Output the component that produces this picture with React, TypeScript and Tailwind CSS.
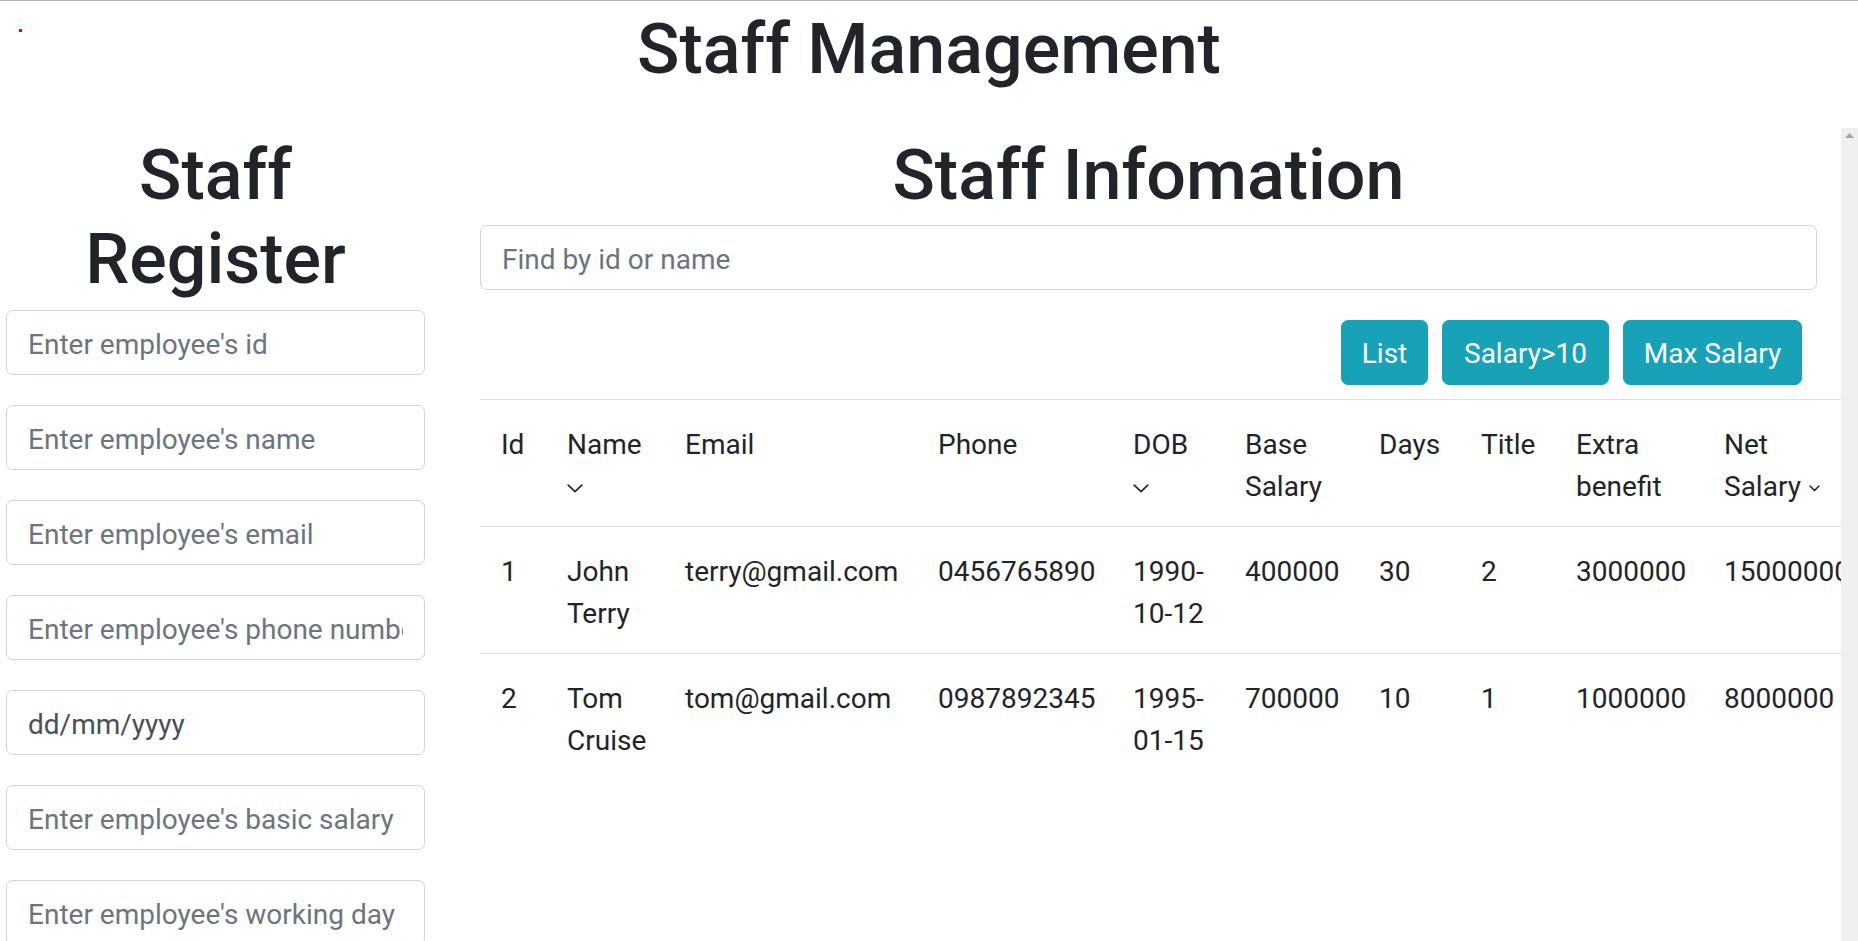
import React from "react";

const FONT = { fontFamily: "Roboto, 'Noto Sans', Arial, sans-serif" };

function Chevron({ small = false }: { small?: boolean }) {
  if (small) {
    return (
      <svg width="11" height="7" viewBox="0 0 11 7" className="inline-block align-middle ml-[8px]" fill="none">
        <polyline points="1,1 5.5,5.5 10,1" stroke="#212529" strokeWidth="1.5" strokeLinecap="round" strokeLinejoin="round" />
      </svg>
    );
  }
  return (
    <svg width="16" height="9" viewBox="0 0 16 9" className="inline-block align-middle" fill="none">
      <polyline points="1.2,1.2 8,7.6 14.8,1.2" stroke="#212529" strokeWidth="1.7" strokeLinecap="round" strokeLinejoin="round" />
    </svg>
  );
}

const inputCls =
  "block w-full h-[65px] px-[21px] pt-[3px] text-[28px] leading-[42px] text-[#495057] placeholder:text-[#6c757d] bg-white border border-[#ced4da] rounded-[7px] outline-none";

const btnCls =
  "h-[65px] pt-[3px] rounded-[7px] bg-[#17a2b8] border border-[#17a2b8] text-white text-[28px] leading-[42px]";

const cell = "align-top text-left font-normal pl-[21px] pr-[8px] pt-[24px] pb-[18px] border-t border-[#dee2e6] leading-[42px] whitespace-nowrap overflow-visible";

type Row = {
  id: string;
  name: [string, string];
  email: string;
  phone: string;
  dob: [string, string];
  base: string;
  days: string;
  title: string;
  extra: string;
  net: string;
};

const rows: Row[] = [
  { id: "1", name: ["John", "Terry"], email: "terry@gmail.com", phone: "0456765890", dob: ["1990-", "10-12"], base: "400000", days: "30", title: "2", extra: "3000000", net: "15000000" },
  { id: "2", name: ["Tom", "Cruise"], email: "tom@gmail.com", phone: "0987892345", dob: ["1995-", "01-15"], base: "700000", days: "10", title: "1", extra: "1000000", net: "8000000" },
];

export default function App() {
  return (
    <div className="relative w-[1858px] h-[941px] overflow-hidden bg-white border-t border-[#b4b4b4] text-[#212529]" style={FONT}>
      <div className="absolute left-[19px] top-[28px] w-[3px] h-[3px] bg-[#ff0000]" />
      <h1 className="mt-[6px] text-center text-[70px] leading-[84px] font-medium">Staff Management</h1>

      <div className="mt-[37px] flex h-[813px] overflow-hidden">
        <div className="flex flex-1 min-w-0 overflow-hidden">
          {/* Left column */}
          <div className="w-[431px] shrink-0 px-[6px]">
            <h1 className="pt-[5px] mb-[9px] text-center text-[70px] leading-[84px] font-medium">
              Staff
              <br />
              Register
            </h1>
            <div className="flex flex-col gap-[30px]">
              <input className={inputCls} placeholder="Enter employee's id" />
              <input className={inputCls} placeholder="Enter employee's name" />
              <input className={inputCls} placeholder="Enter employee's email" />
              <input className={inputCls} placeholder="Enter employee's phone number" />
              <input className={inputCls} defaultValue="dd/mm/yyyy" readOnly />
              <input className={inputCls} placeholder="Enter employee's basic salary" />
              <input className={inputCls} placeholder="Enter employee's working day" />
              <input className={inputCls} placeholder="Enter employee's title" />
            </div>
          </div>

          {/* Right column */}
          <div className="flex-1 min-w-0 pl-[49px] pr-[24px]">
            <h1 className="pt-[5px] mb-[8px] text-center text-[70px] leading-[84px] font-medium">Staff Infomation</h1>
            <input className={inputCls} placeholder="Find by id or name" />
            <div className="mt-[30px] flex justify-end gap-[14px] pr-[15px]">
              <button className={`${btnCls} w-[87px]`}>List</button>
              <button className={`${btnCls} w-[167px]`}>Salary&gt;10</button>
              <button className={`${btnCls} w-[179px]`}>Max Salary</button>
            </div>
            <table className="mt-[14px] table-fixed border-collapse w-[1390px] text-[28px]">
              <colgroup>
                <col className="w-[66px]" />
                <col className="w-[118px]" />
                <col className="w-[253px]" />
                <col className="w-[195px]" />
                <col className="w-[112px]" />
                <col className="w-[134px]" />
                <col className="w-[102px]" />
                <col className="w-[95px]" />
                <col className="w-[148px]" />
                <col className="w-[167px]" />
              </colgroup>
              <thead>
                <tr>
                  <th className={cell}>Id</th>
                  <th className={cell}>
                    Name
                    <br />
                    <Chevron />
                  </th>
                  <th className={cell}>Email</th>
                  <th className={cell}>Phone</th>
                  <th className={cell}>
                    DOB
                    <br />
                    <Chevron />
                  </th>
                  <th className={cell}>
                    Base
                    <br />
                    Salary
                  </th>
                  <th className={cell}>Days</th>
                  <th className={cell}>Title</th>
                  <th className={cell}>
                    Extra
                    <br />
                    benefit
                  </th>
                  <th className={cell}>
                    Net
                    <br />
                    Salary
                    <Chevron small />
                  </th>
                </tr>
              </thead>
              <tbody>
                {rows.map((r) => (
                  <tr key={r.id}>
                    <td className={cell}>{r.id}</td>
                    <td className={cell}>
                      {r.name[0]}
                      <br />
                      {r.name[1]}
                    </td>
                    <td className={cell}>{r.email}</td>
                    <td className={cell}>{r.phone}</td>
                    <td className={cell}>
                      {r.dob[0]}
                      <br />
                      {r.dob[1]}
                    </td>
                    <td className={cell}>{r.base}</td>
                    <td className={cell}>{r.days}</td>
                    <td className={cell}>{r.title}</td>
                    <td className={cell}>{r.extra}</td>
                    <td className={cell}>{r.net}</td>
                  </tr>
                ))}
              </tbody>
            </table>
          </div>
        </div>

        {/* Scrollbar strip */}
        <div className="w-[17px] shrink-0 bg-[#f0f0f0] flex justify-center pt-[5px]">
          <svg width="9" height="5" viewBox="0 0 9 5">
            <polygon points="0,5 4.5,0 9,5" fill="#a3a3a3" />
          </svg>
        </div>
      </div>
    </div>
  );
}
